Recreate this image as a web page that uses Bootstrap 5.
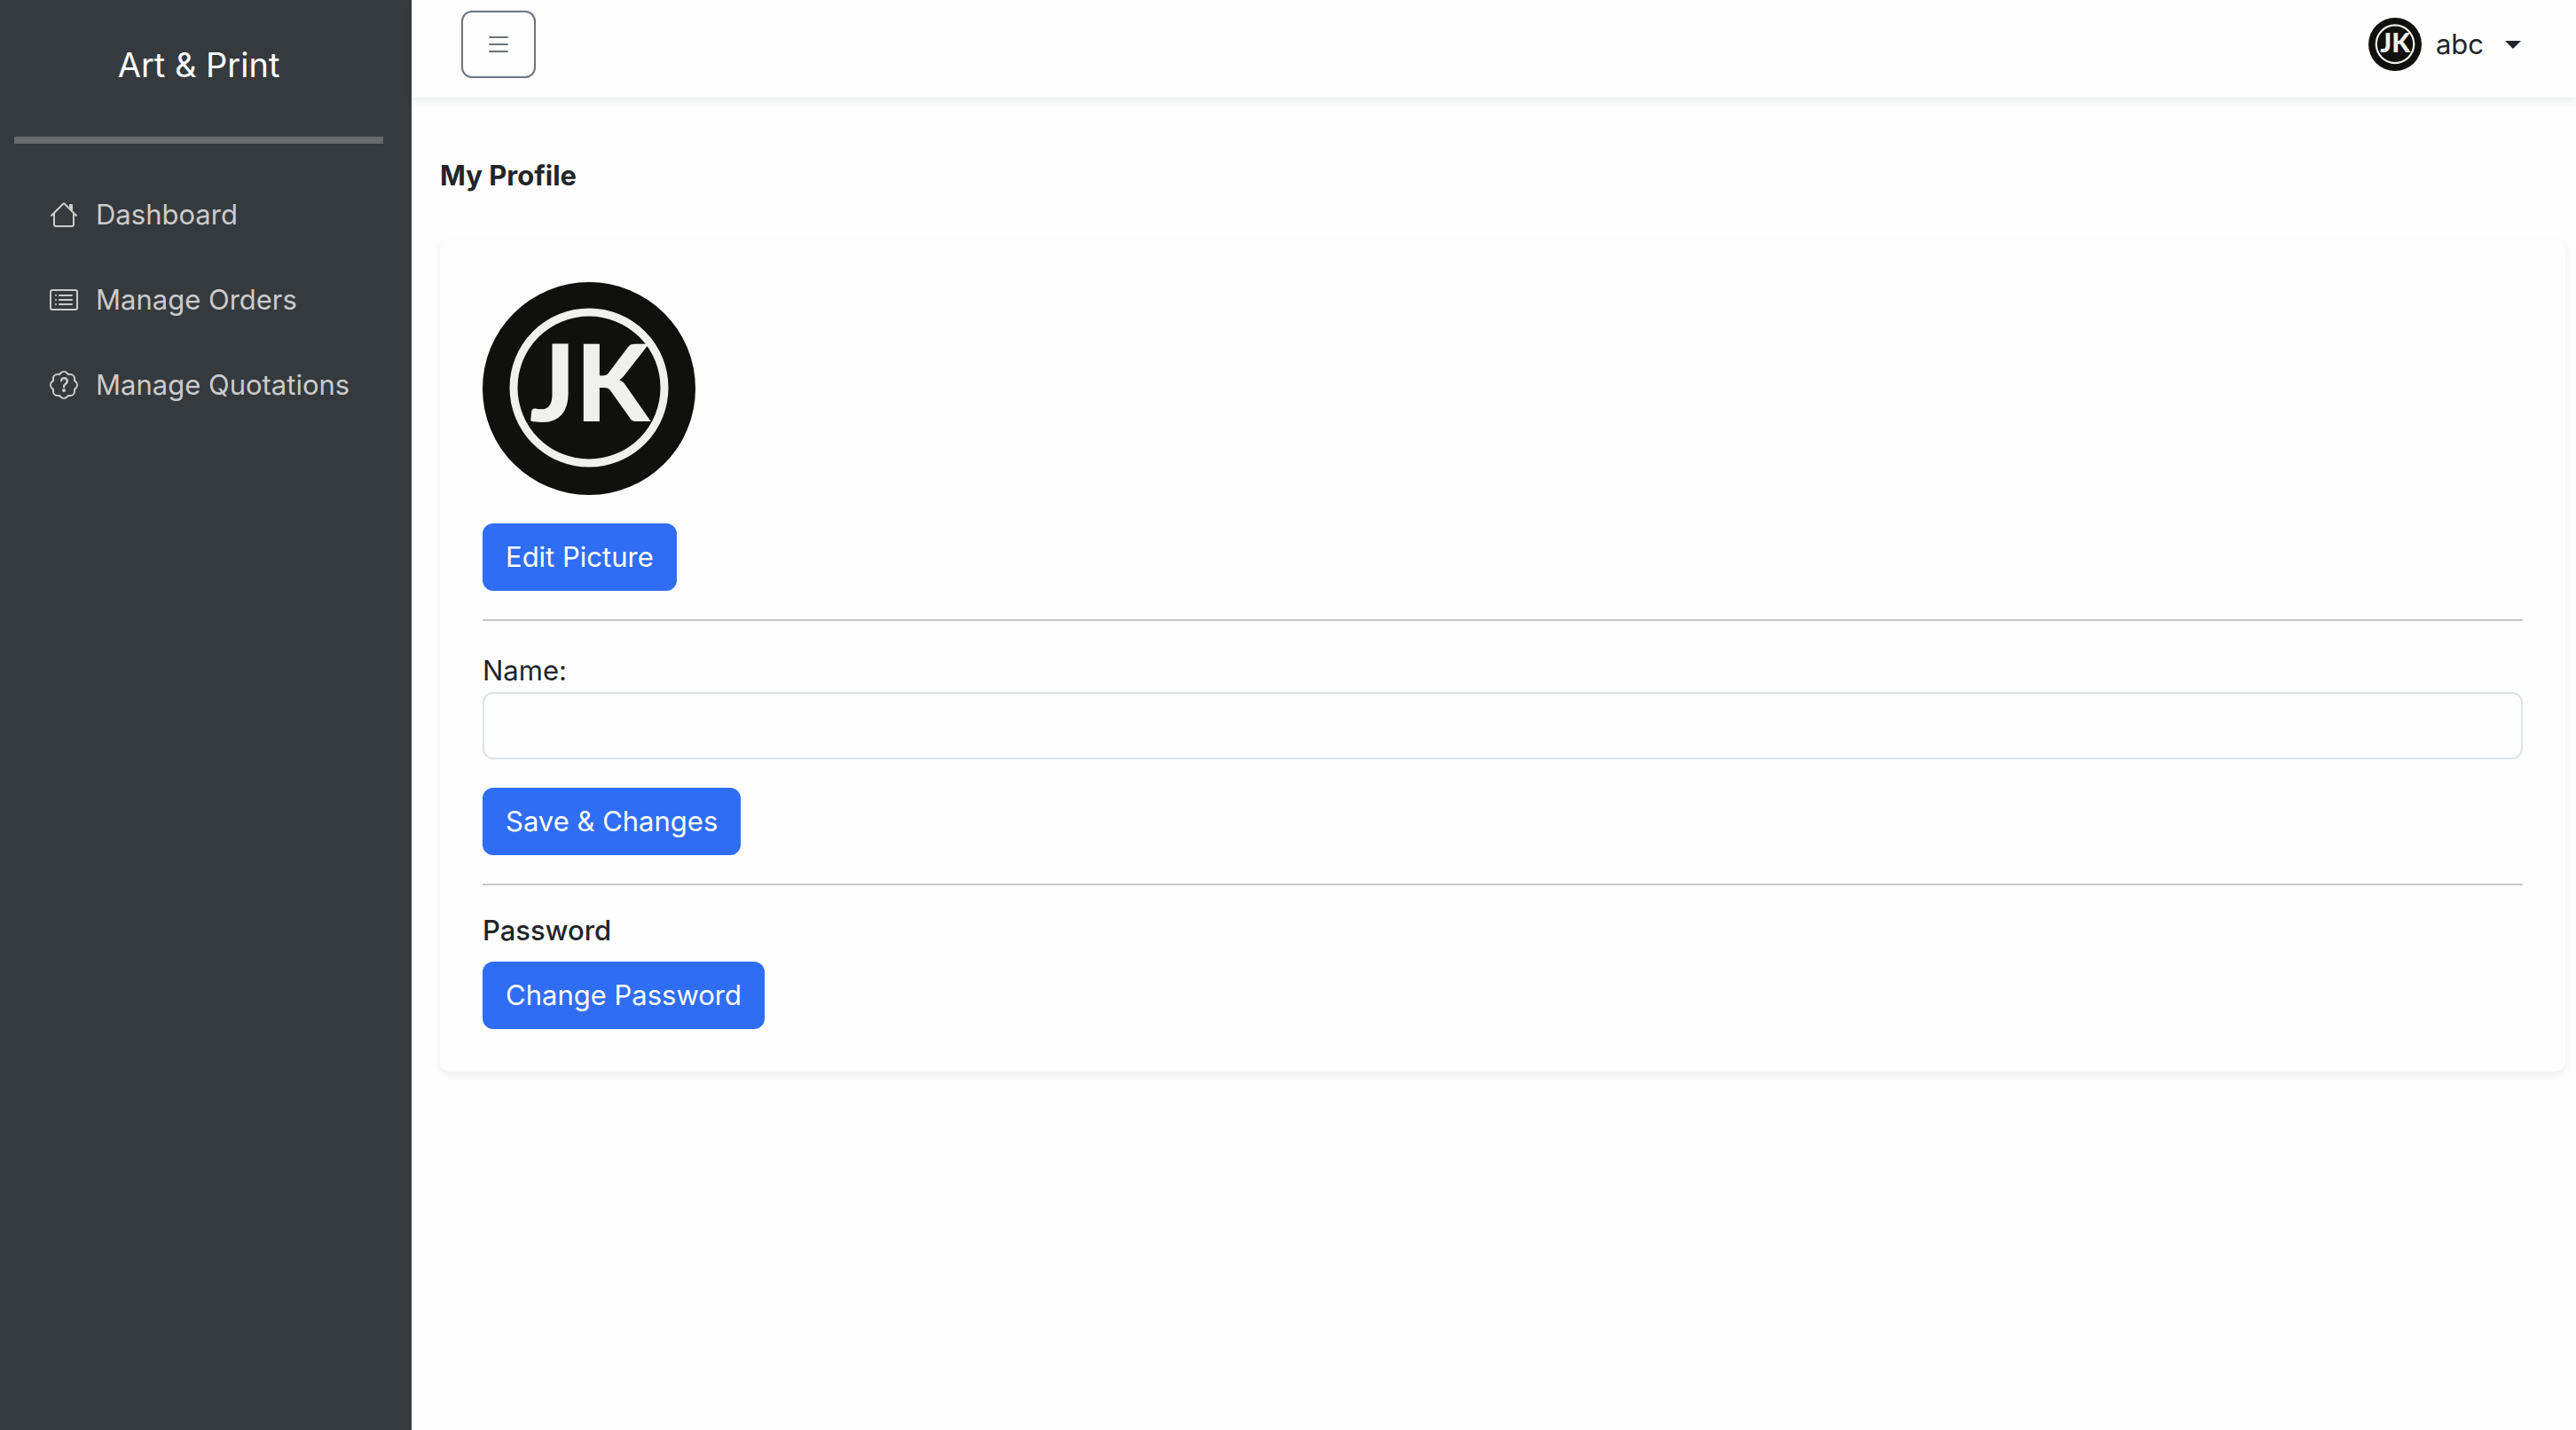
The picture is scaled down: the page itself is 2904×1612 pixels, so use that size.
<!DOCTYPE html>
<html lang="en">
<head>
<meta charset="utf-8">
<meta name="viewport" content="width=device-width, initial-scale=1">
<title>Art &amp; Print - My Profile</title>
<link href="https://cdn.jsdelivr.net/npm/bootstrap@5.3.0/dist/css/bootstrap.min.css" rel="stylesheet">
<style>
  html { font-size: 32px; }
  body {
    --bs-border-width: 2px;
    font-family: Inter, "Liberation Sans", sans-serif;
    font-size: 31px;
    line-height: 48px;
    background: #fefefe;
  }
  svg { display: block; flex: none; }
  .side-panel { width: 464px; flex: none; background: #353a3e; padding: 48px 32px 0 16px; }
  .brand-title { font-size: 38px; line-height: 50px; font-weight: 400; margin: 0; }
  .side-rule { border-top: 8px solid #fff; margin: 56px 0 32px; opacity: .25; }
  .side-link { gap: 20px; padding: 24px 0 24px 40px; color: #cbcbcb; }
  .side-link:hover { color: #fff; }
  .top-bar { padding: 12px 62px 22px 56px; background: #fefefe; }
  .btn { --bs-btn-border-width: 2px; --bs-btn-font-size: 31px; line-height: 48px; }
  .btn-primary { --bs-btn-bg: #306df5; --bs-btn-border-color: #306df5; }
  .user-menu { gap: 16px; }
  .user-menu::after { margin-left: 8px; }
  .page-area { padding: 64px 12px 64px 32px; }
  .profile-card { background: #fefefe; border-radius: 12px; padding: 48px; }
  .profile-card hr { border-top-width: 2px; }
  .form-control { height: 76px; border-width: 2px; background: #fefefe; }
  .pass-title { font-size: 31px; line-height: 38px; }
  .logo-letters { font-family: Lato, Roboto, sans-serif; font-weight: 900; font-size: 120px; fill: #f0f0ee; }
</style>
</head>
<body>
<div class="d-flex min-vh-100">
  <aside class="side-panel">
    <h5 class="brand-title text-white text-center">Art &amp; Print</h5>
    <hr class="side-rule">
    <nav class="d-flex flex-column">
      <a class="side-link d-flex align-items-center text-decoration-none" href="#">
        <svg width="32" height="32" viewBox="0 0 16 16" fill="currentColor" aria-hidden="true"><path d="M2 13.5V7h1v6.5a.5.5 0 0 0 .5.5h9a.5.5 0 0 0 .5-.5V7h1v6.500a1.5 1.5 0 0 1-1.500 1.500h-9A1.500 1.500 0 0 1 2 13.500zm11-11V6l-2-2V2.500a.5.5 0 0 1 .5-.5h1a.5.5 0 0 1 .5.5z"/><path d="M7.293 1.500a1 1 0 0 1 1.414 0l6.647 6.646a.5.5 0 0 1-.708.708L8 2.207 1.354 8.854a.5.5 0 1 1-.708-.708z"/></svg>
        <span>Dashboard</span>
      </a>
      <a class="side-link d-flex align-items-center text-decoration-none" href="#">
        <svg width="32" height="32" viewBox="0 0 16 16" fill="currentColor" aria-hidden="true"><path d="M14.5 3a.5.5 0 0 1 .5.5v9a.5.5 0 0 1-.5.5h-13a.5.5 0 0 1-.5-.5v-9a.5.5 0 0 1 .5-.5zm-13-1A1.5 1.5 0 0 0 0 3.5v9A1.5 1.5 0 0 0 1.5 14h13a1.5 1.5 0 0 0 1.5-1.5v-9A1.5 1.5 0 0 0 14.5 2z"/><path d="M5 8a.5.5 0 0 1 .5-.5h7a.5.5 0 0 1 0 1h-7A.5.5 0 0 1 5 8m0-2.5a.5.5 0 0 1 .5-.5h7a.5.5 0 0 1 0 1h-7a.5.5 0 0 1-.5-.5m0 5a.5.5 0 0 1 .5-.5h7a.5.5 0 0 1 0 1h-7a.5.5 0 0 1-.5-.5m-1-5a.5.5 0 1 1-1 0 .5.5 0 0 1 1 0M4 8a.5.5 0 1 1-1 0 .5.5 0 0 1 1 0m0 2.5a.5.5 0 1 1-1 0 .5.5 0 0 1 1 0"/></svg>
        <span>Manage Orders</span>
      </a>
      <a class="side-link d-flex align-items-center text-decoration-none" href="#">
        <svg width="32" height="32" viewBox="0 0 16 16" fill="currentColor" aria-hidden="true"><path d="M8.05 9.6c.336 0 .504-.24.554-.627.04-.534.198-.815.847-1.26.673-.475 1.049-1.09 1.049-1.986 0-1.325-.92-2.227-2.262-2.227-1.02 0-1.792.492-2.1 1.29A1.7 1.7 0 0 0 6 5.48c0 .393.203.64.545.64.272 0 .455-.147.564-.51.158-.592.525-.915 1.074-.915.61 0 1.03.446 1.03 1.084 0 .563-.208.885-.822 1.325-.619.433-.926.914-.926 1.64v.111c0 .428.208.745.585.745"/><path d="m10.273 2.513-.921-.944.715-.698.622.637.89-.011a2.89 2.89 0 0 1 2.924 2.924l-.01.89.636.622a2.89 2.89 0 0 1 0 4.134l-.637.622.011.89a2.89 2.89 0 0 1-2.924 2.924l-.89-.01-.622.636a2.89 2.89 0 0 1-4.134 0l-.622-.637-.89.011a2.89 2.89 0 0 1-2.924-2.924l.01-.89-.636-.622a2.89 2.89 0 0 1 0-4.134l.637-.622-.011-.89a2.89 2.89 0 0 1 2.924-2.924l.89.01.622-.636a2.89 2.89 0 0 1 4.134 0l-.715.698a1.89 1.89 0 0 0-2.704 0l-.92.944-1.32-.016a1.89 1.89 0 0 0-1.911 1.912l.016 1.318-.944.921a1.89 1.89 0 0 0 0 2.704l.944.92-.016 1.32a1.89 1.89 0 0 0 1.912 1.911l1.318-.016.921.944a1.89 1.89 0 0 0 2.704 0l.92-.944 1.32.016a1.89 1.89 0 0 0 1.911-1.912l-.016-1.318.944-.921a1.89 1.89 0 0 0 0-2.704l-.944-.92.016-1.32a1.89 1.89 0 0 0-1.912-1.911z"/><path d="M7.002 11a1 1 0 1 1 2 0 1 1 0 0 1-2 0"/></svg>
        <span>Manage Quotations</span>
      </a>
    </nav>
  </aside>

  <div class="flex-grow-1">
    <header class="top-bar shadow-sm d-flex justify-content-between align-items-center">
      <button type="button" class="btn btn-outline-secondary" aria-label="Toggle sidebar">
        <svg width="32" height="48" viewBox="0 -4 16 24" fill="currentColor" aria-hidden="true"><path fill-rule="evenodd" d="M2.500 12a.5.5 0 0 1 .5-.5h10a.5.5 0 0 1 0 1H3a.5.5 0 0 1-.5-.5m0-4a.5.5 0 0 1 .5-.5h10a.5.5 0 0 1 0 1H3a.5.5 0 0 1-.5-.5m0-4a.5.5 0 0 1 .5-.5h10a.5.5 0 0 1 0 1H3a.5.5 0 0 1-.5-.5"/></svg>
      </button>
      <div class="dropdown">
        <a class="user-menu dropdown-toggle d-flex align-items-center text-body text-decoration-none" href="#" data-bs-toggle="dropdown">
          <svg width="60" height="60" viewBox="0 0 240 240" role="img" aria-label="Profile picture">
            <circle cx="120" cy="120" r="120" fill="#10110f"/>
            <circle cx="120" cy="119" r="85" fill="none" stroke="#f0f0ee" stroke-width="9"/>
            <text class="logo-letters" x="53" y="157">JK</text>
          </svg>
          <span>abc</span>
        </a>
      </div>
    </header>

    <main class="page-area">
      <p class="fw-bold mb-4">My Profile</p>
      <section class="profile-card shadow-sm">
        <svg class="mb-3" width="240" height="240" viewBox="0 0 240 240" role="img" aria-label="Profile picture">
          <circle cx="120" cy="120" r="120" fill="#10110f"/>
          <circle cx="120" cy="119" r="85" fill="none" stroke="#f0f0ee" stroke-width="9"/>
          <text class="logo-letters" x="53" y="157">JK</text>
        </svg>
        <button type="button" class="btn btn-primary d-block">Edit Picture</button>
        <hr>
        <form>
          <label class="d-block" for="profileName">Name:</label>
          <input type="text" class="form-control mb-3" id="profileName">
          <button type="button" class="btn btn-primary d-block">Save &amp; Changes</button>
        </form>
        <hr>
        <h6 class="pass-title mb-2">Password</h6>
        <button type="button" class="btn btn-primary d-block">Change Password</button>
      </section>
    </main>
  </div>
</div>
<script src="https://cdn.jsdelivr.net/npm/bootstrap@5.3.0/dist/js/bootstrap.bundle.min.js"></script>
</body>
</html>
